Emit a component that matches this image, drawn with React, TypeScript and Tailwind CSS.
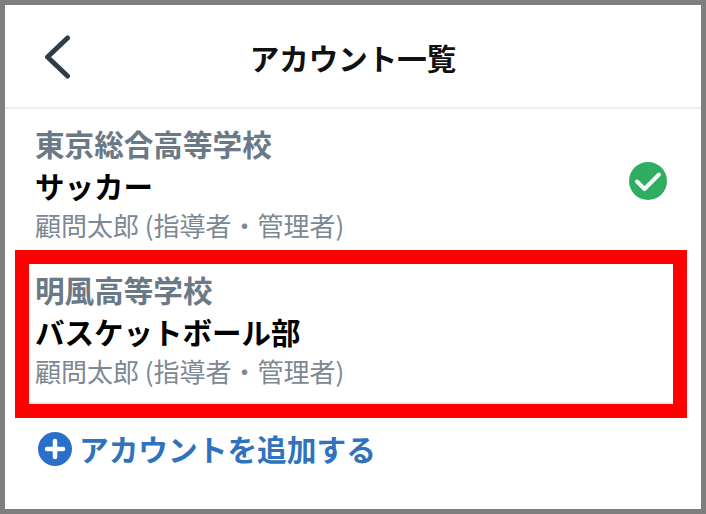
const font = { fontFamily: '"Noto Sans CJK JP", "Noto Sans", sans-serif' };

const AccountInfo = ({ school, team }: { school: string; team: string }) => {
  return (
    <div className="flex flex-col items-start">
      <p className="h-[43px] text-[29.6px] leading-[43px] font-bold text-[#6a7985]">{school}</p>
      <p className="h-[41px] text-[29.5px] leading-[41px] font-bold text-black">{team}</p>
      <p className="h-[38px] text-[26px] leading-[38px] text-[#7c8893]">顧問太郎 (指導者・管理者)</p>
    </div>
  );
};

export default function App() {
  return (
    <div style={font} className="flex h-[514px] w-[706px] flex-col border-[5px] border-[#7f7f7f] bg-white">
      <header className="relative flex h-[104px] shrink-0 items-center justify-center border-b-2 border-[#eeeeee] pt-[4px]">
        <svg className="absolute top-[29px] left-[38px]" width="28" height="46" viewBox="0 0 28 46" fill="none">
          <path d="M24.5 4 L4.5 23 L24.5 42" stroke="#2f3c46" strokeWidth="5" strokeLinecap="round" strokeLinejoin="round" />
        </svg>
        <h1 className="text-[29.5px] leading-none font-bold text-[#111111]">アカウント一覧</h1>
      </header>

      <div className="flex h-[140px] shrink-0 items-center justify-between pt-[7px] pr-[34px] pl-[30px]">
        <AccountInfo school="東京総合高等学校" team="サッカー" />
        <svg className="mb-[3px]" width="38" height="38" viewBox="0 0 38 38" fill="none">
          <circle cx="19" cy="19" r="19" fill="#2fae62" />
          <path d="M8 19.5 L15.5 27 L30 12.5" stroke="#f4fbf6" strokeWidth="4" strokeLinecap="round" strokeLinejoin="round" />
        </svg>
      </div>

      <div className="mt-px mr-[14px] ml-[10px] h-[168px] shrink-0 border-[14px] border-[#ff0000]">
        <div className="flex h-full flex-col justify-center border-b-2 border-[#eeeeee] pb-[9px] pl-[6px]">
          <AccountInfo school="明風高等学校" team="バスケットボール部" />
        </div>
      </div>

      <button className="mt-[9px] ml-[33px] flex items-center gap-[9px] self-start">
        <svg width="34" height="34" viewBox="0 0 34 34" fill="none">
          <circle cx="17" cy="17" r="17" fill="#2a70c8" />
          <path d="M17 9 V25 M9 17 H25" stroke="#ffffff" strokeWidth="4.5" strokeLinecap="round" />
        </svg>
        <span className="-ml-[2px] text-[29.7px] leading-[44px] font-bold text-[#2f72bd]">アカウントを追加する</span>
      </button>
    </div>
  );
}
